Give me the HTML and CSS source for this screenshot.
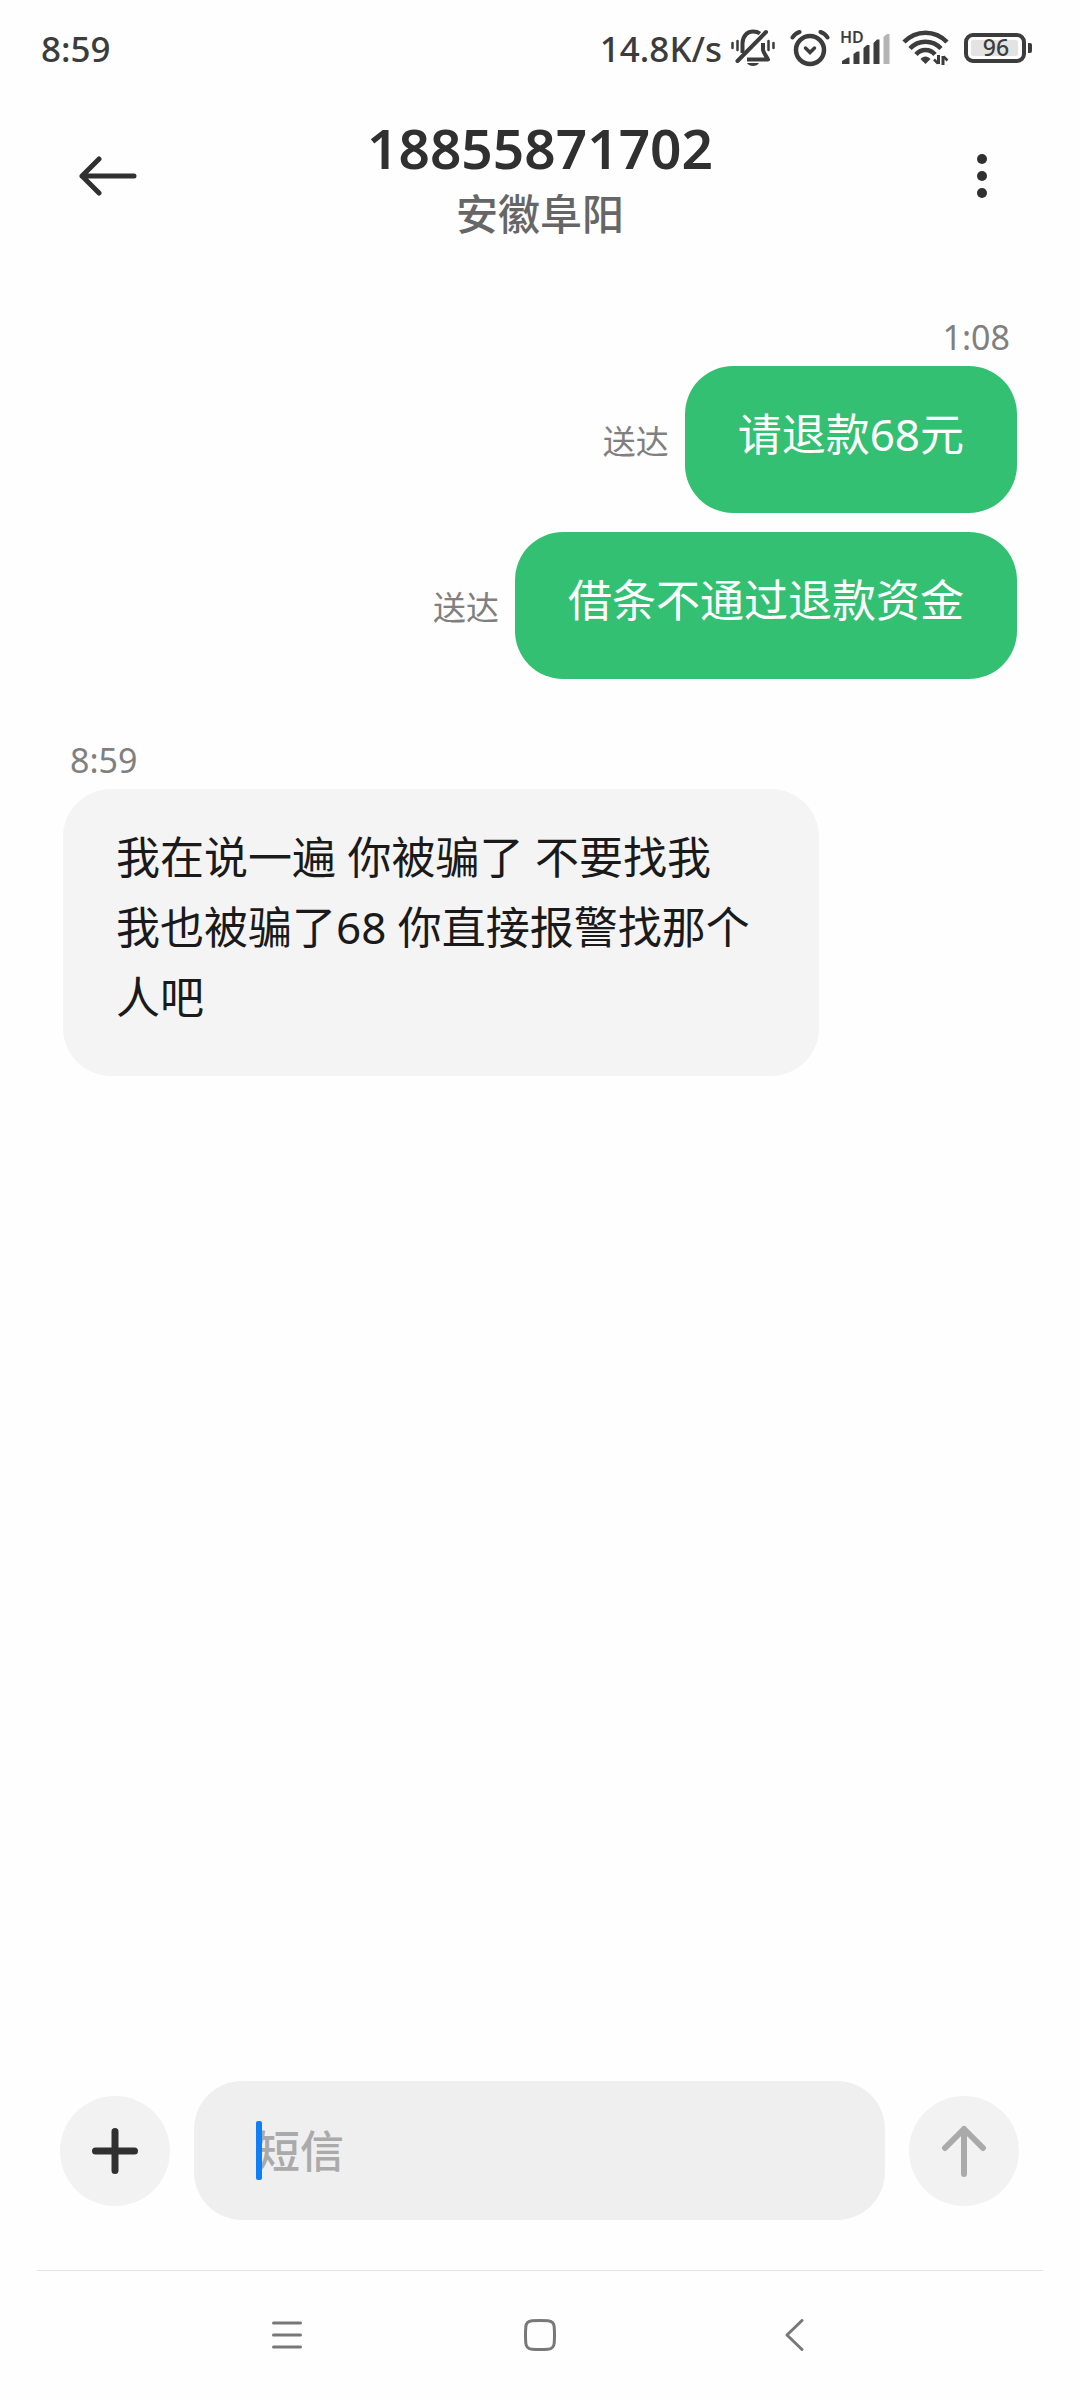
FILE: index.html
```html
<!DOCTYPE html>
<html lang="zh-CN">
<head>
    <meta charset="UTF-8">
    <meta name="viewport" content="width=device-width, initial-scale=1.0">
    <title>短信</title>
    <link rel="stylesheet" href="styles.css">
</head>
<body>
    <div class="status-bar">
        <span class="clock">8:59</span>
        <div class="status-right">
            <span class="speed">14.8K/s</span>
            <!-- silent mode -->
            <svg class="bell" width="46" height="40" viewBox="0 0 46 40" fill="none" stroke="#3c3c3c" stroke-width="4" stroke-linecap="round" stroke-linejoin="round">
                <path d="M12.500 25V15C13 7 18 3.500 23 3.500C26 3.500 28 4 30 5.500" stroke-linecap="butt"/>
                <path d="M7.500 33L36 4"/>
                <path d="M33 15V22C34 26 37 29 38 31.500H22L17 31.500" stroke-linecap="butt"/>
                <path d="M17 35H29C27 39 19 39 17 35Z" fill="#3c3c3c" stroke="none"/>
                <path d="M2.500 15V20M7.500 13V22M38.500 13V22M43.500 15V20" stroke-width="2.500"/>
            </svg>
            <!-- alarm -->
            <svg class="alarm" width="40" height="38" viewBox="0 0 40 38" fill="none" stroke="#3c3c3c" stroke-width="4.500" stroke-linecap="round">
                <circle cx="20" cy="21" r="14"/>
                <path d="M2.500 8.500C4 6 6.500 4 9.500 3M37.500 8.500C36 6 33.500 4 30.500 3" stroke-width="4"/>
                <path d="M15.500 19L20 23.500L24.500 19" stroke-width="3.500"/>
            </svg>
            <!-- mobile signal -->
            <svg class="signal" width="50" height="42" viewBox="0 -4 50 42">
                <text class="hd" x="0" y="12">HD</text>
                <path d="M2 33V30L8 26.500H9.500V33Z M13.500 33V23L17 20.500H19.500V33Z M23.500 33V17L27 14H29.500V33Z M33.500 33V12L37 8.500H39.500V33Z" fill="#3c3c3c"/>
                <path d="M43.500 33V6L47 3H49.500V33Z" fill="#b4b4b4"/>
            </svg>
            <!-- wifi -->
            <svg class="wifi" width="48" height="36" viewBox="0 0 48 36" fill="none" stroke="#3c3c3c" stroke-width="4.500">
                <path d="M2 12C14 -0.500 33 -0.500 45 12"/>
                <path d="M8 18.500C16.500 9.500 30.500 9.500 39 18.500"/>
                <path d="M14 24.500C19 18.500 28 18.500 33 24.500"/>
                <path d="M18.500 29C21 25.500 26 25.500 28.500 29L23.500 34Z" fill="#3c3c3c" stroke="none"/>
                <path d="M36.500 25V34M41 26V35" stroke-width="3"/>
                <path d="M32 29.500L36 33.500M41.500 26.500L45.500 30.500" stroke-width="2.500"/>
            </svg>
            <!-- battery -->
            <svg class="battery" width="68" height="42" viewBox="0 -6 68 42">
                <rect x="2" y="2" width="58" height="26" rx="7" fill="none" stroke="#3c3c3c" stroke-width="4"/>
                <rect x="7" y="7" width="47" height="16" rx="2" fill="#e3e3e3"/>
                <path d="M64 10H66Q68 10 68 12V18Q68 20 66 20H64Z" fill="#3c3c3c"/>
                <text class="level" x="32" y="23" text-anchor="middle">96</text>
            </svg>
        </div>
    </div>

    <header class="chat-header">
        <button class="icon-btn back" type="button" aria-label="返回">
            <svg width="58" height="40" viewBox="0 0 58 40" fill="none" stroke="#303030" stroke-width="5" stroke-linecap="round" stroke-linejoin="round">
                <path d="M55 20H3L20 3M3 20L20 37"/>
            </svg>
        </button>
        <div class="contact">
            <h1>18855871702</h1>
            <p>安徽阜阳</p>
        </div>
        <button class="icon-btn more" type="button" aria-label="更多">
            <svg width="58" height="46" viewBox="0 0 58 46" fill="#303030">
                <circle cx="29" cy="6" r="5"/>
                <circle cx="29" cy="23" r="5"/>
                <circle cx="29" cy="40" r="5"/>
            </svg>
        </button>
    </header>

    <main class="messages">
        <section class="group sent">
            <time>1:08</time>
            <div class="row">
                <span class="state">送达</span>
                <p class="bubble">请退款68元</p>
            </div>
            <div class="row">
                <span class="state">送达</span>
                <p class="bubble">借条不通过退款资金</p>
            </div>
        </section>
        <section class="group received">
            <time>8:59</time>
            <div class="row">
                <p class="bubble">我在说一遍 你被骗了 不要找我<br>我也被骗了68 你直接报警找那个人吧</p>
            </div>
        </section>
    </main>

    <form class="composer">
        <button class="round-btn" type="button" aria-label="添加">
            <svg width="46" height="46" viewBox="0 0 46 46" stroke="#303030" stroke-width="7" stroke-linecap="round">
                <path d="M3.500 23H42.500M23 3.500V42.500"/>
            </svg>
        </button>
        <div class="field">
            <input type="text" placeholder="短信" aria-label="短信">
            <span class="caret"></span>
        </div>
        <button class="round-btn" type="submit" aria-label="发送">
            <svg width="46" height="52" viewBox="0 0 46 52" fill="none" stroke="#aaa" stroke-width="6" stroke-linecap="round" stroke-linejoin="round">
                <path d="M23 49V4M4 23L23 4L42 23"/>
            </svg>
        </button>
    </form>

    <nav class="nav-bar">
        <button type="button" aria-label="最近任务">
            <svg width="32" height="32" viewBox="0 0 32 32" stroke="#787878" stroke-width="3" stroke-linecap="round">
                <path d="M2.500 4H29.500M2.500 16H29.500M2.500 28H29.500"/>
            </svg>
        </button>
        <button type="button" aria-label="主屏幕">
            <svg width="32" height="32" viewBox="0 0 32 32" fill="none" stroke="#787878" stroke-width="3">
                <path d="M8 1.800Q16 1.200 24 1.800Q29.800 2.200 30.200 8Q30.800 16 30.200 24Q29.800 29.800 24 30.200Q16 30.800 8 30.200Q2.200 29.800 1.800 24Q1.200 16 1.800 8Q2.200 2.200 8 1.800Z"/>
            </svg>
        </button>
        <button type="button" aria-label="返回">
            <svg width="32" height="32" viewBox="0 0 32 32" fill="none" stroke="#787878" stroke-width="3" stroke-linecap="round" stroke-linejoin="round">
                <path d="M25 1.500L10 16L25 30.500"/>
            </svg>
        </button>
    </nav>
</body>
</html>
```
FILE: styles.css
```css
* {
    box-sizing: border-box;
}
body {
    display: flex;
    flex-direction: column;
    min-height: 100vh;
    margin: 0;
    background-color: #fefefe;
    color: #1a1a1a;
    font-family: "Noto Sans", "Noto Sans CJK SC", sans-serif;
}
h1,
p {
    margin: 0;
}
button {
    display: flex;
    align-items: center;
    justify-content: center;
    padding: 0;
    border: none;
    background: none;
    cursor: pointer;
}

/* status bar */
.status-bar {
    display: flex;
    align-items: center;
    justify-content: space-between;
    height: 96px;
    padding: 0 48px 0 41px;
    color: #3c3c3c;
    font-size: 35px;
    font-weight: 500;
}
.status-right {
    display: flex;
    align-items: center;
    gap: 14px;
}
.speed {
    margin-right: -6px;
}
.signal {
    margin-left: -4px;
}
.wifi {
    margin-left: -2px;
}
.hd {
    font-size: 16px;
    font-weight: 600;
    fill: #3c3c3c;
}
.level {
    font-size: 23px;
    font-weight: 500;
    fill: #3c3c3c;
}

/* header */
.chat-header {
    display: grid;
    grid-template-columns: 1fr auto 1fr;
    align-items: start;
    padding: 21px 69px 0;
}
.icon-btn {
    height: 118px;
}
.back {
    justify-self: start;
    padding-left: 10px;
}
.more {
    justify-self: end;
}
.contact {
    text-align: center;
}
.contact h1 {
    color: #303030;
    font-size: 55px;
    font-weight: 600;
    line-height: 62px;
}
.contact p {
    color: #666;
    font-size: 42px;
    font-weight: 500;
    line-height: 70px;
}

/* messages */
.messages {
    flex: 1;
    padding: 64px 63px 0;
}
.group {
    display: flex;
    flex-direction: column;
    margin-bottom: 57px;
}
.group time {
    padding: 0 7px;
    margin-bottom: 5px;
    color: #808080;
    font-size: 34px;
    line-height: 48px;
}
.row {
    display: flex;
    align-items: center;
    gap: 16px;
}
.row + .row {
    margin-top: 19px;
}
.sent time {
    text-align: right;
}
.sent .row {
    justify-content: flex-end;
}
.state {
    color: #808080;
    font-size: 33px;
}
.bubble {
    max-width: 756px;
    padding: 33px 53px 44px;
    border-radius: 48px;
    background-color: #f4f4f4;
    font-size: 44px;
    line-height: 70px;
}
.sent .bubble {
    background-color: #34c072;
    color: #fff;
}

/* composer */
.composer {
    display: flex;
    align-items: center;
    gap: 24px;
    padding: 0 61px 50px 60px;
}
.round-btn {
    flex: none;
    width: 110px;
    height: 110px;
    border-radius: 50%;
    background-color: #f2f2f2;
}
.field {
    position: relative;
    flex: 1;
}
.field input {
    display: block;
    width: 100%;
    height: 139px;
    padding: 0 62px;
    border: none;
    border-radius: 48px;
    outline: none;
    background-color: #efefef;
    color: #1a1a1a;
    font-family: inherit;
    font-size: 44px;
}
.field input::placeholder {
    color: #aaa;
    font-weight: 500;
}
.caret {
    position: absolute;
    top: 40px;
    left: 62px;
    width: 6px;
    height: 59px;
    border-radius: 2px;
    background-color: #0d7ff9;
}

/* system navigation */
.nav-bar {
    display: grid;
    grid-template-columns: repeat(3, 1fr);
    height: 130px;
    margin: 0 37px;
    padding: 0 124px 2px;
    border-top: 1px solid #e4e4e4;
}
```
